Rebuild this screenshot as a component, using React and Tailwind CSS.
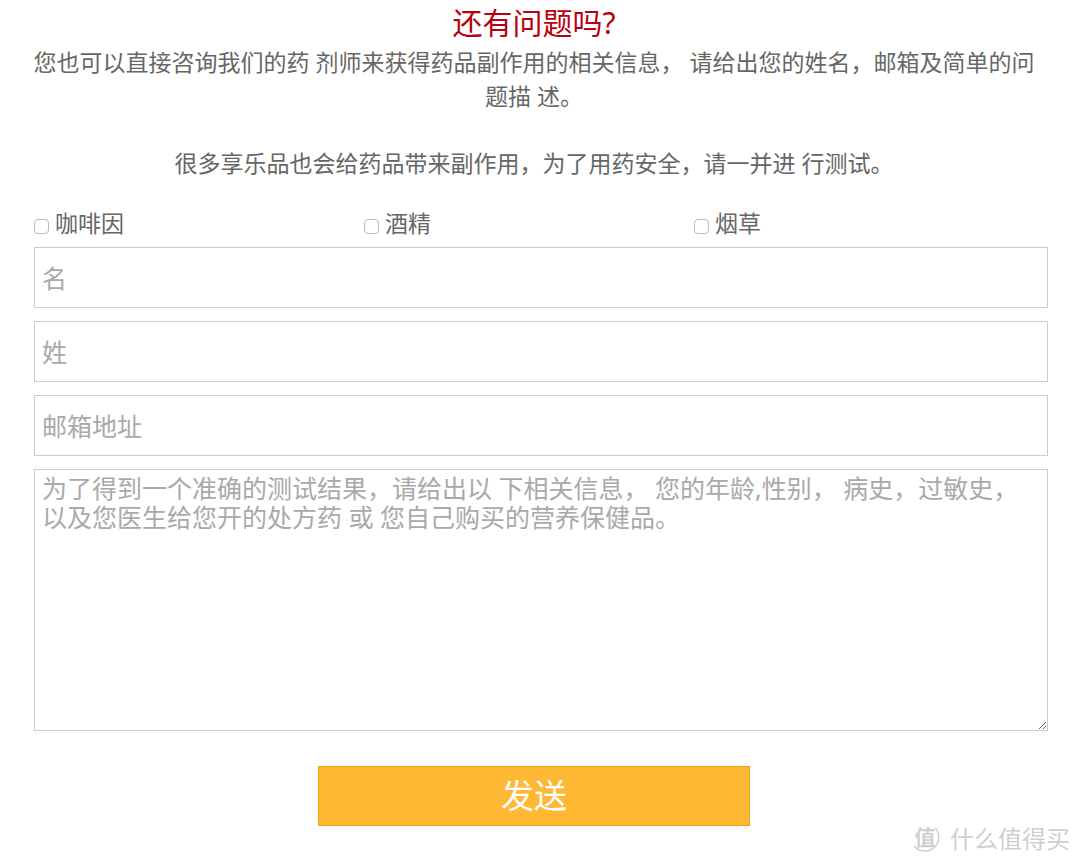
const substances = [
  { id: "caffeine", label: "咖啡因" },
  { id: "alcohol", label: "酒精" },
  { id: "tobacco", label: "烟草" },
]

const fields = [
  { id: "first-name", type: "text", label: "名" },
  { id: "last-name", type: "text", label: "姓" },
  { id: "email", type: "email", label: "邮箱地址" },
]

const messageHint =
  "为了得到一个准确的测试结果，请给出以 下相关信息， 您的年龄,性别， 病史，过敏史，以及您医生给您开的处方药 或 您自己购买的营养保健品。"

function Intro() {
  return (
    <div className="pl-6 pr-9 pt-px text-center text-[23px] leading-[34px] text-[#666]">
      <h2 className="text-[30px] leading-[44px] text-[#b8000f]">还有问题吗?</h2>
      <p>
        您也可以直接咨询我们的药 剂师来获得药品副作用的相关信息， 请给出您的姓名，邮箱及简单的问题描 述。
      </p>
      <p className="mt-[33px]">很多享乐品也会给药品带来副作用，为了用药安全，请一并进 行测试。</p>
    </div>
  )
}

function Watermark() {
  return (
    <div className="absolute bottom-2 right-2.5 flex items-center gap-2 text-[#cfcfcf]">
      <svg viewBox="0 0 32 32" className="h-8 w-8 overflow-visible" fill="none" stroke="currentColor">
        <path d="M25 4.5A14 14 0 1 1 4 23" strokeWidth="1.5" />
        <text
          x="15"
          y="22"
          textAnchor="middle"
          fontSize="21"
          fontWeight="700"
          fill="currentColor"
          stroke="none"
        >
          值
        </text>
      </svg>
      <span className="text-[24px] leading-8">什么值得买</span>
    </div>
  )
}

export default function App() {
  return (
    <main className="relative min-h-screen bg-white pb-9 font-['Noto_Sans','Noto_Sans_CJK_SC',sans-serif]">
      <Intro />

      <form className="mt-5 pl-[34px] pr-8" onSubmit={(e) => e.preventDefault()}>
        <div className="grid grid-cols-3 pb-px pr-6">
          {substances.map((item) => (
            <label key={item.id} className="flex items-center gap-1.5 text-[23px] leading-[46px] text-[#666]">
              <input
                type="checkbox"
                name={item.id}
                className="mt-1.5 h-[15px] w-[15px] appearance-none rounded border border-[#bbb] bg-white checked:bg-[#666]"
              />
              {item.label}
            </label>
          ))}
        </div>

        <div className="flex flex-col gap-[13px]">
          {fields.map((field) => (
            <input
              key={field.id}
              id={field.id}
              type={field.type}
              aria-label={field.label}
              placeholder={field.label}
              className="h-[61px] w-full border border-[#ccc] px-[7px] text-[25px] text-[#666] placeholder:text-[#a9a9a9]"
            />
          ))}
          <textarea
            id="message"
            aria-label="相关信息"
            placeholder={messageHint}
            className="h-[262px] w-full resize border border-[#ccc] px-[7px] py-1 text-[25px] leading-[29px] text-[#666] placeholder:text-[#a9a9a9]"
          />
        </div>

        <div className="mt-[35px] pr-3.5 text-center">
          <button
            type="submit"
            className="h-[60px] w-[432px] max-w-full border border-[#e8a613] bg-[#ffb833] text-[33px] leading-[58px] text-white"
          >
            发送
          </button>
        </div>
      </form>

      <Watermark />
    </main>
  )
}
